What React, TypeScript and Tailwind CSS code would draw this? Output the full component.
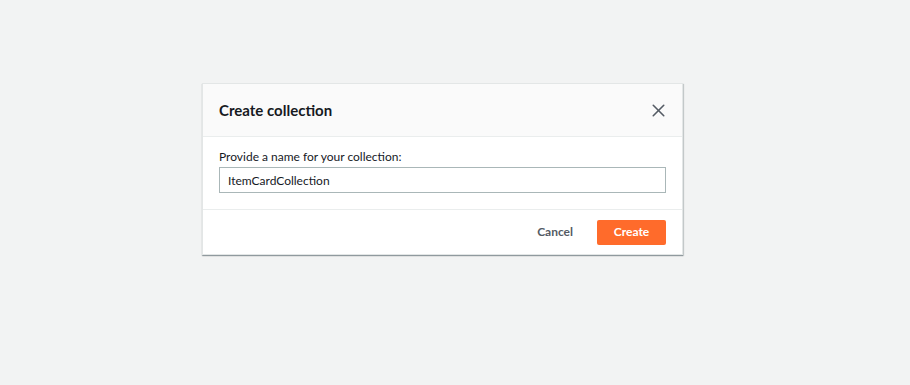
import { X } from "lucide-react"

export default function App() {
  return (
    <div className="h-[385px] w-full overflow-hidden bg-[#f2f3f3] pt-[83px] font-['Lato',sans-serif]">
      <div className="ml-[202px] w-[481px] border border-[#e3e6e6] bg-white shadow-[0_1px_1px_0_rgba(0,28,36,0.3),1px_1px_1px_0_rgba(0,28,36,0.15)]">
        <div className="flex h-[53px] items-center justify-between border-b border-[#eaeded] bg-[#fafafa] px-4">
          <h2 className="text-[15px] font-bold text-[#16191f]">Create collection</h2>
          <button type="button" className="-mr-[3px] text-[#545b64]" aria-label="Close">
            <X className="h-[21px] w-[21px]" strokeWidth={1.8} />
          </button>
        </div>
        <div className="border-b border-[#eaeded] px-4 pb-4 pt-[12px]">
          <label className="block text-[12px] leading-[16px] text-[#16191f]">
            Provide a name for your collection:
          </label>
          <input
            defaultValue="ItemCardCollection"
            className="mt-[2px] h-[26px] w-full border border-[#aab7b8] px-2 text-[12px] text-[#16191f] outline-none"
          />
        </div>
        <div className="flex h-[44px] items-center justify-end gap-6 px-4">
          <button type="button" className="text-[12px] font-bold text-[#545b64]">
            Cancel
          </button>
          <button
            type="button"
            className="h-[25px] w-[69px] rounded-[2px] bg-[#ff6b2b] text-[12px] font-bold text-white"
          >
            Create
          </button>
        </div>
      </div>
    </div>
  )
}
